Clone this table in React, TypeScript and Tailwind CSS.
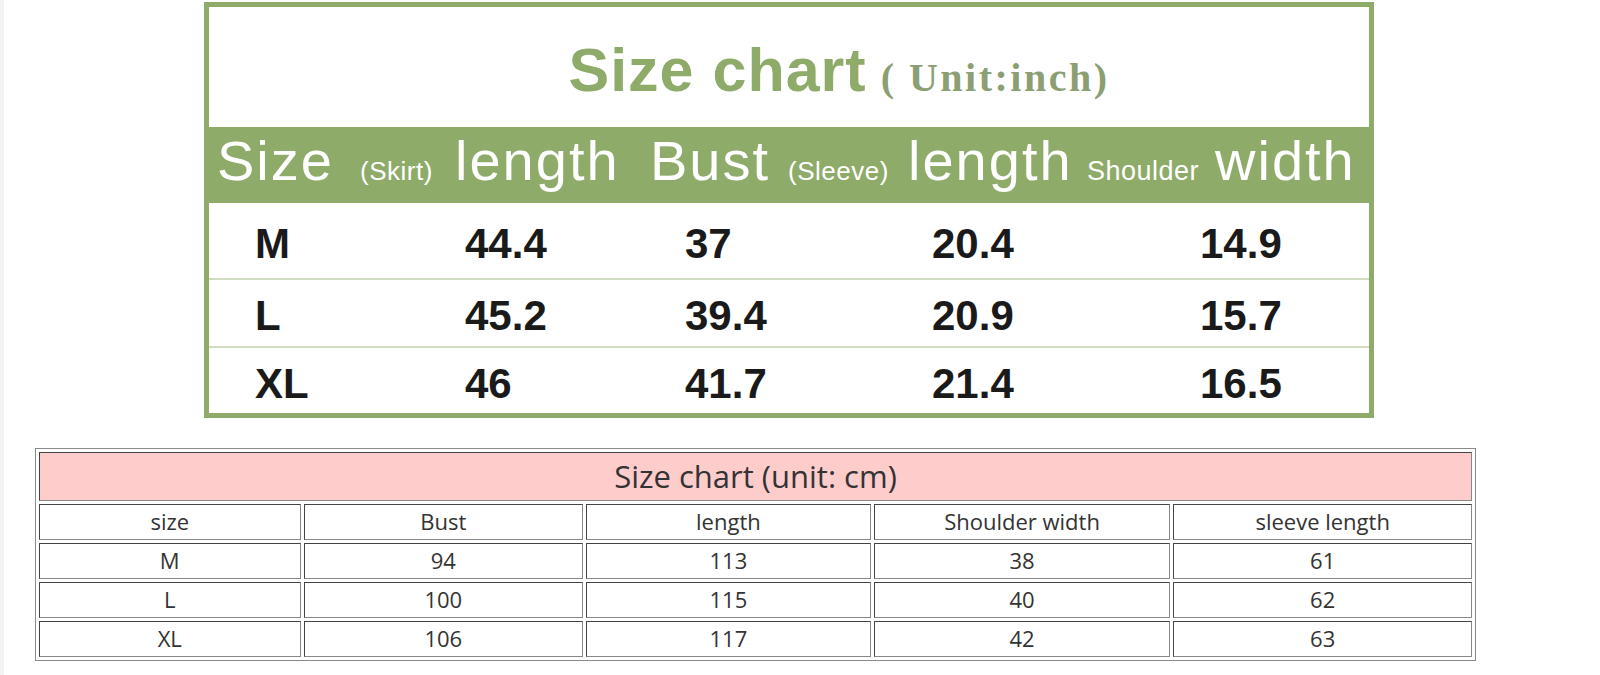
const inchRows = [
  ["M", "44.4", "37", "20.4", "14.9"],
  ["L", "45.2", "39.4", "20.9", "15.7"],
  ["XL", "46", "41.7", "21.4", "16.5"],
];

const cmHead = ["size", "Bust", "length", "Shoulder width", "sleeve length"];
const cmRows = [
  ["M", "94", "113", "38", "61"],
  ["L", "100", "115", "40", "62"],
  ["XL", "106", "117", "42", "63"],
];

const colW = ["w-[261px]", "w-[279px]", "w-[284px]", "w-[296px]", "w-[298px]"];

function InchChart() {
  return (
    <div className="ml-[204px] mt-[2px] w-[1170px] border-[5px] border-[#8fab69] bg-white">
      {/* title */}
      <div className="h-[120px] flex items-baseline justify-center pt-[33px] pl-[100px]">
        <span className="text-[61px] leading-none font-bold text-[#8fab69] tracking-[1px] font-['Liberation_Sans',sans-serif]">
          Size chart
        </span>
        <span className="ml-[14px] text-[40px] leading-none font-bold text-[#8c9f72] tracking-[2.5px] font-['Liberation_Serif',serif]">
          ( Unit:inch)
        </span>
      </div>

      {/* header band */}
      <div className="h-[76px] bg-[#8fab69] flex items-baseline pt-[6px] pl-[8px] text-white font-['Liberation_Sans',sans-serif] leading-none">
        <span className="w-[143px] text-[56px] tracking-[2px]">Size</span>
        <span className="w-[95px] text-[26px] tracking-[0.5px]">(Skirt)</span>
        <span className="w-[195px] text-[56px] tracking-[2px]">length</span>
        <span className="w-[138px] text-[56px] tracking-[2px]">Bust</span>
        <span className="w-[120px] text-[26px] tracking-[0.5px]">(Sleeve)</span>
        <span className="w-[179px] text-[56px] tracking-[2px]">length</span>
        <span className="w-[128px] text-[27px] tracking-[0.5px]">Shoulder</span>
        <span className="text-[56px] tracking-[2px]">width</span>
      </div>

      {/* rows */}
      <div className="font-['Liberation_Sans',sans-serif] font-bold text-[#1a1a1a] text-[42px] leading-none">
        {inchRows.map((r, i) => (
          <div
            key={r[0]}
            className={
              "flex items-center pl-[46px] pt-[6px] " +
              (i === 0 ? "h-[77px] " : i === 1 ? "h-[68px] " : "h-[65px] ") +
              (i < 2 ? "border-b-2 border-[#d0dcbf]" : "")
            }
          >
            <span className="w-[210px]">{r[0]}</span>
            <span className="w-[220px]">{r[1]}</span>
            <span className="w-[247px]">{r[2]}</span>
            <span className="w-[268px]">{r[3]}</span>
            <span>{r[4]}</span>
          </div>
        ))}
      </div>
    </div>
  );
}

function CmTable() {
  const cell =
    "border border-t-[#444] border-l-[#444] border-b-[#888] border-r-[#888] text-center font-normal p-0";
  return (
    <table className="ml-[35px] mt-[30px] w-[1441px] border-separate border-spacing-[3px] border border-[#8a8a8a] font-['Open_Sans',sans-serif] text-[#333] table-fixed">
      <colgroup>
        {colW.map((w, i) => (
          <col key={i} className={w} />
        ))}
      </colgroup>
      <tbody>
        <tr>
          <td colSpan={5} className={cell + " h-[48px] bg-[#ffcccc] text-[31px]"}>
            Size chart (unit: cm)
          </td>
        </tr>
        <tr>
          {cmHead.map((h) => (
            <td key={h} className={cell + " h-[36px] text-[22px]"}>
              {h}
            </td>
          ))}
        </tr>
        {cmRows.map((r) => (
          <tr key={r[0]}>
            {r.map((v, i) => (
              <td key={i} className={cell + " h-[36px] text-[22px]"}>
                {v}
              </td>
            ))}
          </tr>
        ))}
      </tbody>
    </table>
  );
}

export default function App() {
  return (
    <div className="w-[1600px] h-[675px] overflow-hidden bg-white border-l-[4px] border-[#f2f2f2]">
      <div className="-ml-[4px]">
        <InchChart />
        <CmTable />
      </div>
    </div>
  );
}
